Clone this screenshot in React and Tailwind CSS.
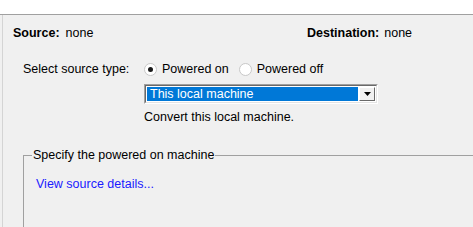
export default function App() {
  return (
    <div
      className="w-[473px] h-[227px] bg-white overflow-hidden text-[12.5px] leading-[14px] text-[#000]"
      style={{ fontFamily: '"Liberation Sans", Arial, sans-serif' }}
    >
      <div className="h-[14px] bg-white" />
      <div className="h-[213px] bg-[#f0f0f0] border-t border-[#a0a0a0] pl-[2px]">
        <div className="h-full border-l border-[#d4d4d4]">
          <div className="flex pt-[11px] pl-[10px]">
            <div className="w-[294px] flex">
              <span className="font-bold">Source:</span>
              <span className="ml-[6px]">none</span>
            </div>
            <div className="flex">
              <span className="font-bold">Destination:</span>
              <span className="ml-[5px]">none</span>
            </div>
          </div>

          <div className="flex items-center pl-[20px] mt-[22px]">
            <span className="w-[121px]">Select source type:</span>
            <div className="flex items-center">
              <span className="w-[13px] h-[13px] rounded-full bg-white border border-[#c8c8c8] flex items-center justify-center">
                <span className="w-[5px] h-[5px] rounded-full bg-[#1a1a1a]" />
              </span>
              <span className="ml-[5px]">Powered on</span>
            </div>
            <div className="flex items-center ml-[10px]">
              <span className="w-[13px] h-[13px] rounded-full bg-white border border-[#c8c8c8]" />
              <span className="ml-[5px]">Powered off</span>
            </div>
          </div>

          <div className="ml-[141px] mt-[8px] w-[234px] h-[20px] border-t border-l border-[#a0a0a0] border-r border-b border-r-white border-b-white">
            <div className="h-full border-t border-l border-[#696969] border-r border-b border-r-[#e3e3e3] border-b-[#e3e3e3] bg-white flex p-[1px]">
              <div className="flex-1 bg-[#0078d7] text-white pl-[3px] leading-[14px] flex items-center">
                This local machine
              </div>
              <div className="w-[16px] ml-[1px] bg-[#f0f0f0] border-t border-l border-white border-r border-b border-r-[#696969] border-b-[#696969] flex items-center justify-center">
                <svg width="7" height="4" viewBox="0 0 7 4">
                  <path d="M0 0H7L3.5 4Z" fill="#000" />
                </svg>
              </div>
            </div>
          </div>

          <div className="ml-[141px] mt-[6px]">Convert this local machine.</div>

          <div className="ml-[20px] mt-[31px] h-[100px] border-t border-l border-[#a0a0a0] relative">
            <span className="absolute left-[8px] top-[-8px] bg-[#f0f0f0] px-[1px]">
              Specify the powered on machine
            </span>
            <div className="pt-[21px] pl-[12px] text-[#1a1aff]">View source details...</div>
          </div>
        </div>
      </div>
    </div>
  );
}
